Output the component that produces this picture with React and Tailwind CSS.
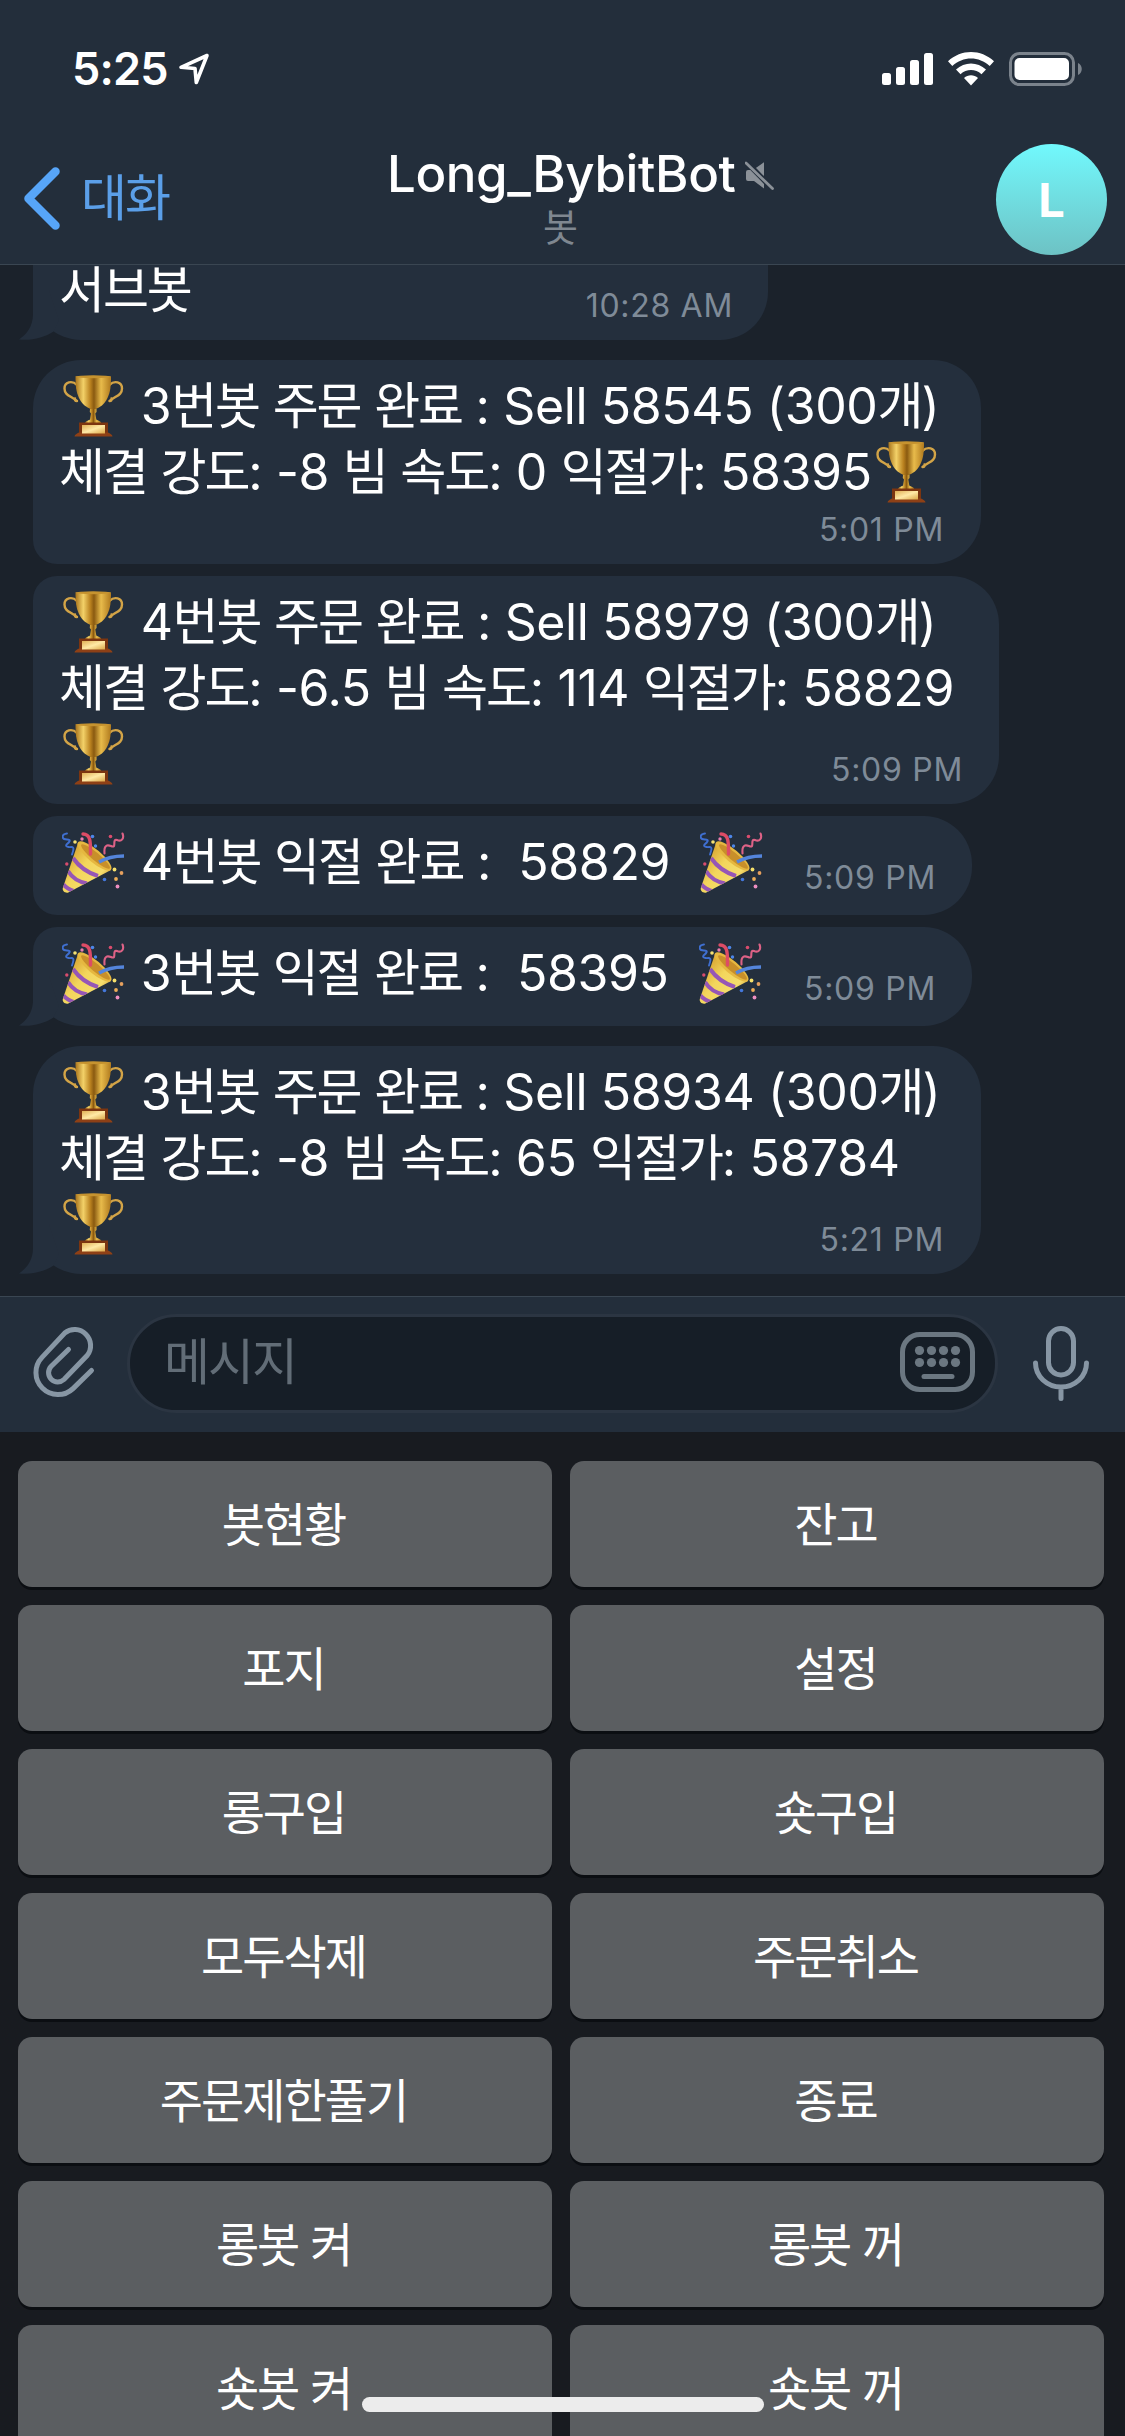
import React from "react";

const HANGUL = /([\uac00-\ud7a3]+)/;

// Splits a string so that Hangul and Latin runs each get their own metrics.
function Mixed({ text }) {
  return text.split(HANGUL).map((part, i) =>
    HANGUL.test(part) ? (
      <span key={i} className="font-['Noto_Sans_CJK_KR',sans-serif] text-[50px] leading-[0] tracking-[-2.100px]">
        {part}
      </span>
    ) : (
      <span key={i}>{part}</span>
    )
  );
}

function Trophy() {
  return (
    <span className="inline-flex h-[66px] w-[68px] items-start pl-[4px] pt-[2px] align-top">
      <svg width="61" height="62" viewBox="0 0 61 62" fill="none">
        <defs>
          <linearGradient id="cup" x1="0" x2="1">
            <stop offset="0" stopColor="#a8741c" />
            <stop offset=".22" stopColor="#f3d168" />
            <stop offset=".42" stopColor="#b9811f" />
            <stop offset=".52" stopColor="#8a5a10" />
            <stop offset=".72" stopColor="#e8bb4b" />
            <stop offset="1" stopColor="#b07a1e" />
          </linearGradient>
          <linearGradient id="plate" x1="0" x2="1" y2="1">
            <stop offset="0" stopColor="#e0b055" />
            <stop offset=".5" stopColor="#ffe9a6" />
            <stop offset="1" stopColor="#dca848" />
          </linearGradient>
        </defs>
        <path d="M14 10C9 5 1.5 7 1.5 13.500C1.500 20 7 20.500 14 26M14 26c-2 0-2.500-1-2-2.500M46.500 10C51.500 5 59 7 59 13.500C59 20 53.500 20.500 46.500 26M46.500 26c2 0 2.500-1 2-2.500" stroke="#d3a447" strokeWidth="2.400" strokeLinecap="round" />
        <path d="M12.500 1.500h35.500c0 9-.5 15-3.500 21.500c-3 6.500-8 9.500-11.500 11h-5.500c-3.500-1.500-8.500-4.500-11.500-11c-3-6.500-3.500-12.500-3.500-21.500z" fill="url(#cup)" />
        <ellipse cx="30.200" cy="1.800" rx="17.700" ry="1.500" fill="#c6932f" />
        <path d="M27 34h6.500v3l-1.200 1.500l1 6c2 1 5 2 5 4h-16.300c0-2 3-3 5-4l1-6l-1.200-1.500z" fill="url(#cup)" />
        <path d="M16 47.500h29v12h-29z" fill="#7c3510" />
        <path d="M11.500 61.500c0-2 2.500-3 4.500-4h29c2 1 4.500 2 4.500 4z" fill="#8e4016" />
        <path d="M19 50h23v8.500h-23z" fill="url(#plate)" />
      </svg>
    </span>
  );
}

function Popper() {
  return (
    <span className="inline-flex h-[66px] w-[68px] items-start pl-[3px] pt-[3px] align-top">
      <svg width="63" height="62" viewBox="0 0 63 62" fill="none">
        <defs>
          <linearGradient id="cone" x1="0" y1="0.300" x2="0.800" y2="1">
            <stop offset="0" stopColor="#d6a02e" />
            <stop offset=".4" stopColor="#f3d65c" />
            <stop offset=".75" stopColor="#f5dc6c" />
            <stop offset="1" stopColor="#c69328" />
          </linearGradient>
          <clipPath id="coneclip">
            <path d="M16 11L.8 56c-.8 3 2.500 5.500 5.500 4.500L49 38z" />
          </clipPath>
        </defs>
        <path d="M16 11L.8 56c-.8 3 2.500 5.500 5.500 4.500L49 38z" fill="url(#cone)" />
        <g clipPath="url(#coneclip)" stroke="#9656b6" strokeWidth="4">
          <path d="M11 26Q20 39 36 44" />
          <path d="M6 39Q12 49 25 51.500" />
          <path d="M1 52Q5 57 13 59.500" />
        </g>
        <ellipse cx="32.500" cy="24" rx="21.500" ry="6.500" transform="rotate(40 32.500 24)" fill="#e6b840" />
        <ellipse cx="33.500" cy="24.500" rx="18.500" ry="4" transform="rotate(40 33.500 24.500)" fill="#c88f2a" />
        <path d="M21 2c8 0 7.500 9 7.500 20" stroke="#dd4c66" strokeWidth="3.400" strokeLinecap="round" />
        <path d="M37 30c7-4 13-6 25-6" stroke="#5485dc" strokeWidth="3.400" />
        <path d="M5 1.500c-6 1-5.500 6 0 6c5 0 2 3-.5 5c-1.500 2 2 3 5 2.500c3 0 2 3 .5 7.500" stroke="#3f6fd0" strokeWidth="1.900" strokeLinecap="round" />
        <path d="M60.500 1.500c2 5-1 8.500-5.500 6.500c-4-1-2 4-3 6c-1.500 2-4-1.500-7-.5c-3.500 1.500-2.500 5-2.500 8" stroke="#dd6286" strokeWidth="2.100" strokeLinecap="round" />
        <g>
          <circle cx="20" cy="7" r="1.700" fill="#e97eb0" />
          <circle cx="13" cy="10" r="1.800" fill="#f5e172" />
          <circle cx="30.500" cy="4.500" r="1.800" fill="#4d86e8" />
          <circle cx="33.500" cy="14" r="1.700" fill="#4d86e8" />
          <circle cx="48.500" cy="4.500" r="1.800" fill="#d94c6d" />
          <circle cx="4.800" cy="32" r="1.700" fill="#d94c6d" />
          <circle cx="52.500" cy="37.500" r="1.900" fill="#f6e06b" />
          <circle cx="59.500" cy="41" r="1.900" fill="#e5a05e" />
          <circle cx="54" cy="47" r="1.900" fill="#eeae57" />
          <circle cx="42.500" cy="47.500" r="1.800" fill="#4478dc" />
          <circle cx="55.500" cy="54.500" r="1.900" fill="#ee8fc2" />
        </g>
      </svg>
    </span>
  );
}

const EMOJI = { T: Trophy, P: Popper };

function Line({ parts }) {
  return (
    <div className="-ml-px h-[66px] shrink-0 whitespace-pre tracking-[-0.400px]">
      {parts.map((p, i) => {
        const Icon = EMOJI[p];
        return Icon ? <Icon key={i} /> : <Mixed key={i} text={p} />;
      })}
    </div>
  );
}

function Tail() {
  return (
    <svg className="absolute bottom-0 left-[-14px]" width="50" height="60" viewBox="0 0 50 60">
      <path d="M14 10V34C14 46 8 54 0 59.500C12 61 26 57.500 34.500 51.500L40 40L30 10Z" fill="#242f3d" />
    </svg>
  );
}

function Bubble({ box, lines, last, time, tail }) {
  return (
    <div className={"relative ml-[33px] flex shrink-0 flex-col bg-[#242f3d] pl-[27px] pt-[13px] " + box}>
      {tail && <Tail />}
      {lines.map((l, i) => (
        <Line key={i} parts={l} />
      ))}
      <div className="relative flex min-h-0 flex-1 justify-between">
        {last ? <Line parts={last} /> : <span />}
        <time className="h-[40px] self-end whitespace-pre text-[32px] leading-[40px] tracking-[0.700px] text-[#7f8b98]">{time}</time>
      </div>
    </div>
  );
}

const MESSAGES = [
  {
    box: "mt-[95px] h-[204px] w-[948px] rounded-[48px] rounded-bl-[24px] pb-[14px] pr-[37px]",
    lines: [
      ["T", " 3번봇 주문 완료 : Sell 58545 (300개)"],
      ["체결 강도: -8 빔 속도: 0 익절가: 58395", "T"],
    ],
    time: "5:01 PM",
  },
  {
    box: "mt-[12px] h-[228px] w-[966px] rounded-[48px] rounded-l-[24px] pb-[14px] pr-[36px]",
    lines: [
      ["T", " 4번봇 주문 완료 : Sell 58979 (300개)"],
      ["체결 강도: -6.5 빔 속도: 114 익절가: 58829"],
    ],
    last: ["T"],
    time: "5:09 PM",
  },
  {
    box: "mt-[12px] h-[99px] w-[939px] rounded-[48px] rounded-l-[24px] pb-[17px] pr-[36px]",
    lines: [],
    last: ["P", " 4번봇 익절 완료 :  58829  ", "P"],
    time: "5:09 PM",
  },
  {
    box: "mt-[12px] h-[99px] w-[939px] rounded-[48px] rounded-tl-[24px] pb-[17px] pr-[36px]",
    lines: [],
    last: ["P", " 3번봇 익절 완료 :  58395  ", "P"],
    time: "5:09 PM",
    tail: true,
  },
  {
    box: "mt-[20px] h-[228px] w-[948px] rounded-[48px] pb-[14px] pr-[37px]",
    lines: [
      ["T", " 3번봇 주문 완료 : Sell 58934 (300개)"],
      ["체결 강도: -8 빔 속도: 65 익절가: 58784"],
    ],
    last: ["T"],
    time: "5:21 PM",
    tail: true,
  },
];

const KEYS = [
  "봇현황", "잔고", "포지", "설정", "롱구입", "숏구입", "모두삭제", "주문취소",
  "주문제한풀기", "종료", "롱봇 켜", "롱봇 꺼", "숏봇 켜", "숏봇 꺼",
];

function StatusBar() {
  return (
    <div className="flex h-[132px] items-start justify-between pl-[72px] pr-[42px]">
      <div className="flex items-start">
        <span className="mt-[39px] w-[97px] text-[45px] font-semibold leading-[60px] tracking-[-0.800px] text-white">5:25</span>
        <svg className="ml-[9px] mt-[53px]" width="32" height="33" viewBox="0 0 32 33" fill="none" stroke="#fff" strokeWidth="3.600" strokeLinejoin="round">
          <path d="M29 2.500L3 14.300l14 1.200l1.300 14z" />
        </svg>
      </div>
      <div className="flex items-start pt-[52px]">
        <svg width="51" height="34" viewBox="0 0 51 34" fill="#fff">
          <rect x="0" y="21" width="9" height="12" rx="2.500" />
          <rect x="14" y="15" width="9" height="18" rx="2.500" />
          <rect x="28" y="8" width="9" height="25" rx="2.500" />
          <rect x="42" y="1" width="9" height="32" rx="2.500" />
        </svg>
        <svg className="ml-[15px]" width="46" height="34" viewBox="0 0 46 34" fill="#fff">
          <path d="M0 9.300C13-3.100 33-3.100 46 9.300l-4.300 4.800C31 4 15 4 4.300 14.100z" />
          <path d="M8 17.500c8.500-8 21.500-8 30 0l-4.500 4.800c-6-5.600-15-5.600-21 0z" />
          <path d="M16 26c4-3.700 10-3.700 14 0l-7 7.500z" />
        </svg>
        <svg className="ml-[15px]" width="74" height="34" viewBox="0 0 74 34">
          <rect x="1.500" y="1.500" width="63" height="31" rx="9" fill="none" stroke="#7b838c" strokeWidth="3" />
          <rect x="5.500" y="6" width="54.500" height="22" rx="5" fill="#fff" />
          <path d="M69 11c5 2 5 10 0 12z" fill="#7b838c" />
        </svg>
      </div>
    </div>
  );
}

function NavBar() {
  return (
    <div className="grid h-[132px] grid-cols-[387px_1fr_129px]">
      <div className="flex items-start pl-[23px] font-['Noto_Sans_CJK_KR',sans-serif] text-[50px] leading-[66px] tracking-[-2px] text-[#5b9fe8]">
        <svg className="mt-[34px]" width="38" height="65" viewBox="0 0 38 65" fill="none" stroke="#57a5f8" strokeWidth="8.500" strokeLinecap="round" strokeLinejoin="round">
          <path d="M32.500 5.500L5.500 32.500l27 27" />
        </svg>
        <span className="ml-[20px] mt-[29px]">대화</span>
      </div>
      <div>
        <div className="flex items-center pt-[14px]">
          <span className="w-[348px] text-[51px] font-medium leading-[56px] tracking-[-0.400px] text-white">Long_BybitBot</span>
          <svg className="ml-[10px] mt-[3px]" width="29" height="29" viewBox="0 0 29 29" fill="none">
            <path d="M8 9L19 1.200V27.500L9 20H3Q1 20 1 18V11Q1 9 3 9z" fill="#8b9198" />
            <path d="M2 1.500l26 27" stroke="#232e3b" strokeWidth="5.500" />
            <path d="M1 2l26.500 25.500" stroke="#8b9198" strokeWidth="2.800" strokeLinecap="round" />
          </svg>
        </div>
        <div className="ml-[156px] mt-px font-['Noto_Sans_CJK_KR',sans-serif] text-[38px] leading-[44px] text-[#7f8790]">봇</div>
      </div>
      <div className="pt-[12px]">
        <div className="flex h-[111px] w-[111px] items-center justify-center rounded-full bg-linear-to-b from-[#71f9fd] to-[#6dc2c4] text-[47px] font-bold text-white">L</div>
      </div>
    </div>
  );
}

function InputBar() {
  return (
    <div className="flex h-[136px] shrink-0 items-start border-t border-[#3a4652] bg-[#232e3b] pt-[17px]">
      <svg className="ml-[31px] mt-[11px]" width="66" height="74" viewBox="31 1325 66 74" fill="none" stroke="#8796a4" strokeWidth="5" strokeLinecap="round">
        <path d="M91.500 1370.500L73 1388.600A22 22 0 0 1 42 1357.400L64.700 1333A16 16 0 0 1 87.300 1355.300L64 1379.500A9.200 9.200 0 0 1 51 1366.500L68.500 1349.500" />
      </svg>
      <div className="ml-[30px] flex h-[99px] w-[871px] items-start rounded-full border-[3px] border-[#2b3542] bg-[#161e27] pl-[34px]">
        <span className="mt-[8px] flex-1 font-['Noto_Sans_CJK_KR',sans-serif] text-[50px] leading-[66px] tracking-[-2px] text-[#626d77]">메시지</span>
        <svg className="mr-[20px] mt-[15px]" width="75" height="60" viewBox="0 0 75 60" fill="#6b7781">
          <rect x="2.500" y="2.500" width="70" height="55" rx="17.500" fill="none" stroke="#6b7781" strokeWidth="5" />
          {[19.5, 31.5, 43.5, 55.5].map((x) => (
            <g key={x}>
              <circle cx={x} cy="18.500" r="4.600" />
              <circle cx={x} cy="30.500" r="4.600" />
            </g>
          ))}
          <rect x="21.500" y="42" width="33" height="5" rx="2.500" />
        </svg>
      </div>
      <svg className="ml-[34px] mt-[11px]" width="58" height="77" viewBox="1032 1325 58 77" fill="none" stroke="#8796a4" strokeWidth="5" strokeLinecap="round">
        <rect x="1048.500" y="1328.500" width="25" height="46.500" rx="12.500" />
        <path d="M1035.500 1363a25.500 24 0 0 0 51 0M1061 1388v10.500" />
      </svg>
    </div>
  );
}

export default function App() {
  return (
    <div className="relative flex h-[2436px] w-[1125px] flex-col overflow-hidden bg-[#181b20] font-['Inter','Noto_Sans_CJK_KR',sans-serif] text-[50px] leading-[66px] text-white">
      <header className="h-[265px] shrink-0 border-b border-[#3a4652] bg-[#232e3b]">
        <StatusBar />
        <NavBar />
      </header>
      <main className="relative flex h-[1031px] shrink-0 flex-col bg-[#1b222b]">
        <div className="absolute left-[33px] top-0 flex h-[75px] w-[735px] rounded-b-[48px] bg-[#242f3d] pl-[27px] pr-[35px]">
          <Tail />
          <div className="relative -mt-[8px]">
            <Line parts={["서브봇"]} />
          </div>
          <time className="mb-[14px] ml-auto h-[40px] self-end text-[32px] leading-[40px] tracking-[0.700px] text-[#7f8b98]">10:28 AM</time>
        </div>
        {MESSAGES.map((m, i) => (
          <Bubble key={i} {...m} />
        ))}
      </main>
      <InputBar />
      <div className="grid shrink-0 grid-cols-[534px_534px] gap-[18px] pl-[18px] pt-[29px]">
        {KEYS.map((k) => (
          <button key={k} className="h-[126px] rounded-[14px] bg-[#5b5e61] pb-[4px] pr-[3px] font-['Noto_Sans_CJK_KR',sans-serif] text-[47px] leading-[66px] tracking-[-2px] text-white shadow-[0_3px_0_#0b0e12] [word-spacing:3px]">
            {k}
          </button>
        ))}
      </div>
      <div className="absolute bottom-[24px] left-[362px] h-[15px] w-[402px] rounded-full bg-[#ececec]" />
    </div>
  );
}
